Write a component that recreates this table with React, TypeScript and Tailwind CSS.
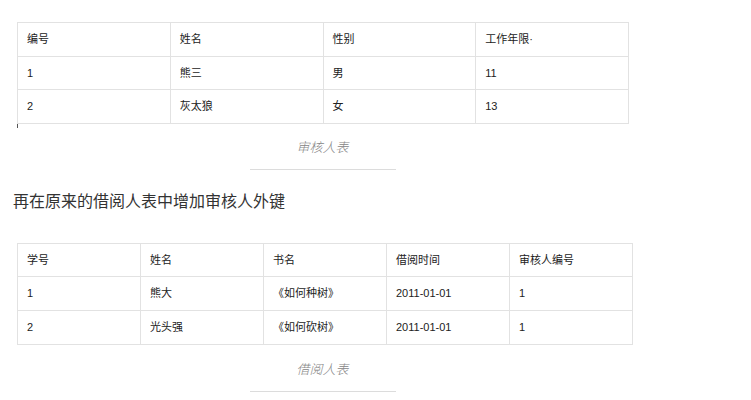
const font = { fontFamily: '"Liberation Sans", "Noto Sans CJK SC", sans-serif' };

type TableProps = {
    head: string[];
    rows: string[][];
    width: string;
};

function DataTable({ head, rows, width }: TableProps) {
    const all = [head, ...rows];
    return (
        <table className={`${width} ml-[17px] border-collapse table-fixed text-[11px] text-[#222]`}>
            <tbody>
                {all.map((row, i) => (
                    <tr key={i}>
                        {row.map((cell, j) => (
                            <td key={j} className="h-[33.6px] border border-[#e2e2e2] pl-[9px] align-middle">
                                {cell}
                            </td>
                        ))}
                    </tr>
                ))}
            </tbody>
        </table>
    );
}

function Caption({ text }: { text: string }) {
    return (
        <div className="w-[645px] flex flex-col items-center">
            <div className="text-[13px] italic font-light text-[#858585] leading-[17px]">{text}</div>
            <div className="mt-[13px] w-[146px] h-px bg-[#dcdcdc]" />
        </div>
    );
}

export default function App() {
    return (
        <div className="w-[751px] h-[400px] bg-white overflow-hidden pt-[22px]" style={font}>
            <div className="relative">
                <DataTable
                    width="w-[612px]"
                    head={['编号', '姓名', '性别', '工作年限·']}
                    rows={[
                        ['1', '熊三', '男', '11'],
                        ['2', '灰太狼', '女', '13'],
                    ]}
                />
                {/* small stray mark under the first table */}
                <div className="absolute left-[17px] bottom-[-4px] w-px h-[4px] bg-[#555]" />
            </div>
            <div className="mt-[15px]">
                <Caption text="审核人表" />
            </div>
            <p className="mt-[21px] ml-[13px] text-[16px] leading-[22px] text-[#333]">
                再在原来的借阅人表中增加审核人外键
            </p>
            <div className="mt-[30px]">
                <DataTable
                    width="w-[616px]"
                    head={['学号', '姓名', '书名', '借阅时间', '审核人编号']}
                    rows={[
                        ['1', '熊大', '《如何种树》', '2011-01-01', '1'],
                        ['2', '光头强', '《如何砍树》', '2011-01-01', '1'],
                    ]}
                />
            </div>
            <div className="mt-[16px]">
                <Caption text="借阅人表" />
            </div>
        </div>
    );
}
